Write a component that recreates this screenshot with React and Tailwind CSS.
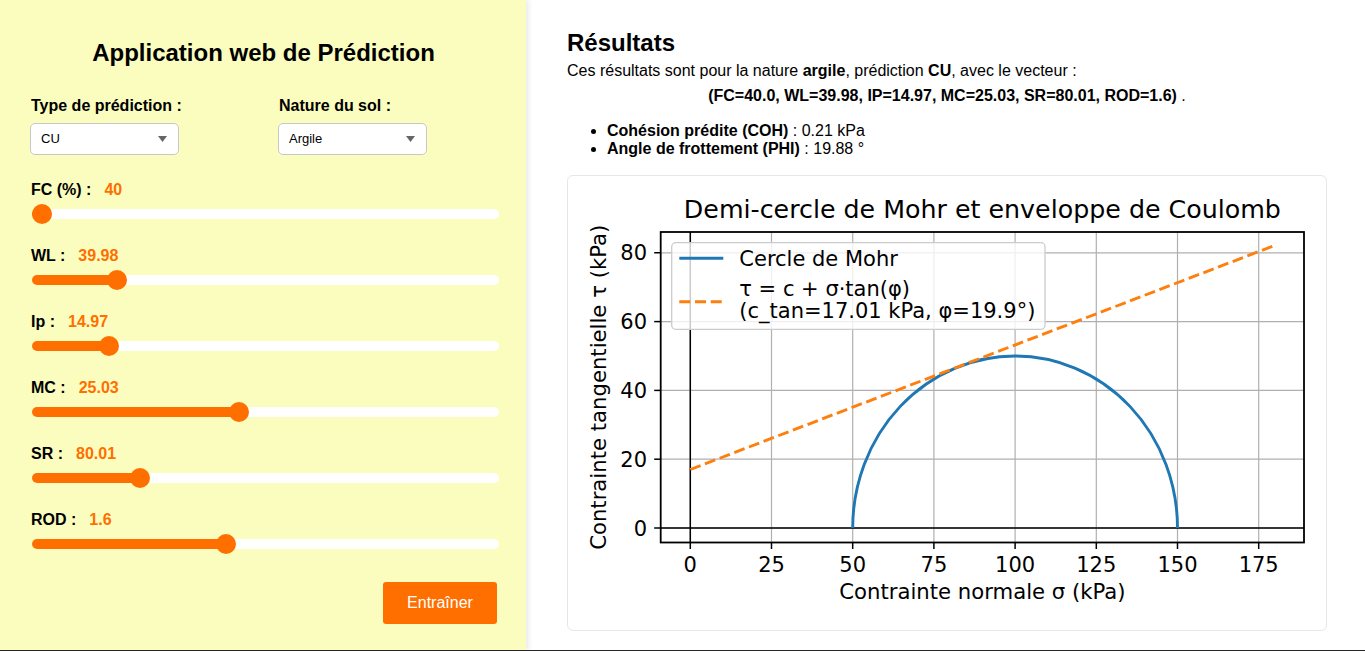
import React from 'react'

const sliders = [
  { label: 'FC (%) :', value: '40', pos: 0 },
  { label: 'WL :', value: '39.98', pos: 0.168 },
  { label: 'Ip :', value: '14.97', pos: 0.151 },
  { label: 'MC :', value: '25.03', pos: 0.44 },
  { label: 'SR :', value: '80.01', pos: 0.22 },
  { label: 'ROD :', value: '1.6', pos: 0.412 },
]

function FakeSelect({ value }) {
  return (
    <div className="h-[32px] w-[149px] bg-white border border-[#c8c8c8] rounded-[5px] flex items-center justify-between pl-[10px] pr-[11px] text-[13px]">
      <span>{value}</span>
      <svg width="9" height="6" viewBox="0 0 9 6">
        <polygon points="0,0 9,0 4.5,6" fill="#666666" />
      </svg>
    </div>
  )
}

function Slider({ label, value, pos }) {
  return (
    <div className="mb-[23px]">
      <div className="flex items-center text-[16px] leading-[18px] font-bold">
        <span>{label}</span>
        <span className="ml-[13px] text-[#ff6f00]">{value}</span>
      </div>
      <div className="relative mt-[5px] h-[20px] ml-px flex items-center">
        <div className="h-[10px] w-full rounded-full bg-white" />
        <div
          className="absolute left-0 h-[10px] rounded-full bg-[#ff6f00]"
          style={{ width: `calc(${pos} * (100% - 20px) + 10px)` }}
        />
        <div
          className="absolute top-0 w-[20px] h-[20px] rounded-full bg-[#ff6f00]"
          style={{ left: `calc(${pos} * (100% - 20px))` }}
        />
      </div>
    </div>
  )
}

function MohrChart() {
  const X = (s) => 123.3 + 3.248 * s
  const Y = (t) => 353 - 3.44 * t
  const L = 93.7, R = 737, T = 57, B = 367.5
  const xt = [0, 25, 50, 75, 100, 125, 150, 175]
  const yt = [0, 20, 40, 60, 80]
  const blue = '#1f77b4'
  const orange = '#ff7f0e'

  return (
    <svg width="758" height="454" viewBox="1 1 758 454" className="block">
      <g fontFamily="'DejaVu Sans', sans-serif" fill="#000">
        <defs>
          <clipPath id="axes-clip">
            <rect x={L} y={T} width={R - L} height={B - T} />
          </clipPath>
        </defs>

        {/* grid */}
        <g stroke="#b0b0b0" strokeWidth="1.2">
          {xt.map((t) => (
            <line key={'gx' + t} x1={X(t)} x2={X(t)} y1={T} y2={B} />
          ))}
          {yt.map((t) => (
            <line key={'gy' + t} x1={L} x2={R} y1={Y(t)} y2={Y(t)} />
          ))}
        </g>

        {/* axhline / axvline */}
        <g stroke="#000" strokeWidth="1.5">
          <line x1={L} x2={R} y1={Y(0)} y2={Y(0)} />
          <line x1={X(0)} x2={X(0)} y1={T} y2={B} />
        </g>

        <g clipPath="url(#axes-clip)" fill="none" strokeWidth="2.9">
          <path
            d={`M ${X(50)} ${Y(0)} A ${50 * 3.248} ${50 * 3.44} 0 0 1 ${X(150)} ${Y(0)}`}
            stroke={blue}
          />
          <line
            x1={X(0)}
            y1={Y(17.01)}
            x2={X(180)}
            y2={Y(17.01 + 180 * Math.tan((19.9 * Math.PI) / 180))}
            stroke={orange}
            strokeDasharray="11 4.7"
          />
        </g>

        {/* spines */}
        <rect x={L} y={T} width={R - L} height={B - T} fill="none" stroke="#000" strokeWidth="1.8" />

        {/* ticks */}
        <g stroke="#000" strokeWidth="1.5">
          {xt.map((t) => (
            <line key={'tx' + t} x1={X(t)} x2={X(t)} y1={B} y2={B + 6.5} />
          ))}
          {yt.map((t) => (
            <line key={'ty' + t} x1={L - 6.5} x2={L} y1={Y(t)} y2={Y(t)} />
          ))}
        </g>

        <g fontSize="21" fill="#000">
          {xt.map((t) => (
            <text key={'lx' + t} x={X(t)} y={396.7} textAnchor="middle">{t}</text>
          ))}
          {yt.map((t) => (
            <text key={'ly' + t} x={80} y={Y(t) + 7.6} textAnchor="end">{t}</text>
          ))}
        </g>

        <text x={415.4} y={42.8} fontSize="25.3" textAnchor="middle">
          Demi-cercle de Mohr et enveloppe de Coulomb
        </text>
        <text x={415.4} y={424.3} fontSize="21.2" textAnchor="middle">
          Contrainte normale σ (kPa)
        </text>
        <text
          x={39}
          y={212.3}
          fontSize="21.2"
          textAnchor="middle"
          transform="rotate(-90 39 212.3)"
        >
          Contrainte tangentielle τ (kPa)
        </text>

        {/* legend */}
        <rect
          x={104.7}
          y={67.7}
          width={373.3}
          height={86.6}
          rx="4"
          fill="#ffffff"
          fillOpacity="0.8"
          stroke="#cccccc"
          strokeWidth="1.3"
        />
        <line x1={112.3} x2={156.3} y1={83.3} y2={83.3} stroke={blue} strokeWidth="2.9" />
        <line x1={112.3} x2={156.3} y1={126.7} y2={126.7} stroke={orange} strokeWidth="2.9" strokeDasharray="11 4.7" />
        <g fontSize="21">
          <text x={172.3} y={91}>Cercle de Mohr</text>
          <text x={172.3} y={121.3}>τ = c + σ·tan(φ)</text>
          <text x={172.3} y={143.3}>(c_tan=17.01 kPa, φ=19.9°)</text>
        </g>
      </g>
    </svg>
  )
}

export default function App() {
  return (
    <div className="h-[651px] flex overflow-hidden border-b border-[#262626] text-black font-['Liberation_Sans',Arial,sans-serif]">
      <aside className="relative z-10 w-[526px] shrink-0 bg-[#fafdbe] shadow-[3px_0_5px_rgba(0,0,0,0.08)] pl-[31px] pr-[27px] pt-[39px]">
        <h1 className="text-center text-[24px] leading-[28px] font-bold -ml-[3px]">
          Application web de Prédiction
        </h1>

        <div className="mt-[30px] grid grid-cols-[248px_149px]">
          <div>
            <label className="block text-[16px] leading-[18px] font-bold">Type de prédiction :</label>
            <div className="mt-[8px] -ml-px">
              <FakeSelect value="CU" />
            </div>
          </div>
          <div>
            <label className="block text-[16px] leading-[18px] font-bold">Nature du sol :</label>
            <div className="mt-[8px] -ml-px">
              <FakeSelect value="Argile" />
            </div>
          </div>
        </div>

        <div className="mt-[26px]">
          {sliders.map((s) => (
            <Slider key={s.label} {...s} />
          ))}
        </div>

        <div className="flex justify-end mt-[28px] pr-[2px]">
          <button className="h-[42px] w-[114px] rounded-[3px] bg-[#ff6f00] text-white text-[16px]">
            Entraîner
          </button>
        </div>
      </aside>

      <main className="flex-1 bg-white pl-[41px] pr-[38px] pt-[29px]">
        <h2 className="text-[24px] leading-[28px] font-bold">Résultats</h2>
        <p className="mt-[5px] text-[16px] leading-[18px]">
          Ces résultats sont pour la nature <b>argile</b>, prédiction <b>CU</b>, avec le vecteur :
        </p>
        <p className="mt-[7px] text-[16px] leading-[18px] text-center">
          <b>(FC=40.0, WL=39.98, IP=14.97, MC=25.03, SR=80.01, ROD=1.6)</b> .
        </p>
        <ul className="mt-[17px] list-disc pl-10 text-[16px] leading-[18px]">
          <li>
            <b>Cohésion prédite (COH)</b> : 0.21 kPa
          </li>
          <li>
            <b>Angle de frottement (PHI)</b> : 19.88 °
          </li>
        </ul>
        <div className="mt-[17px] w-[760px] h-[456px] border border-[#e6e6e6] rounded-[6px] bg-white overflow-hidden">
          <MohrChart />
        </div>
      </main>
    </div>
  )
}
